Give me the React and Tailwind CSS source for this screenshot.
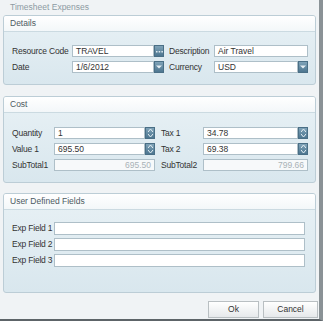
import React from 'react'

const font = { fontFamily: '"Liberation Sans", Arial, sans-serif' }

function SideButton({ kind }) {
  return (
    <div className="w-[10px] h-full shrink-0 flex flex-col items-center justify-center bg-gradient-to-b from-[#7fa3b8] to-[#4d7690] border border-[#4a6f86]">
      {kind === 'dots' && (
        <svg width="7" height="3" viewBox="0 0 7 3"><rect x="0" y="1" width="1.5" height="1.5" fill="#dfeaf0" /><rect x="2.7" y="1" width="1.5" height="1.5" fill="#dfeaf0" /><rect x="5.4" y="1" width="1.5" height="1.5" fill="#dfeaf0" /></svg>
      )}
      {kind === 'drop' && (
        <svg width="6" height="4" viewBox="0 0 6 4"><path d="M0 0.5 L6 0.5 L3 3.5 Z" fill="#e6eff4" /></svg>
      )}
      {kind === 'spin' && (
        <div className="flex flex-col items-center gap-[2px]">
          <svg width="5" height="3" viewBox="0 0 5 3"><path d="M0 3 L2.5 0 L5 3" fill="none" stroke="#e6eff4" strokeWidth="1" /></svg>
          <svg width="5" height="3" viewBox="0 0 5 3"><path d="M0 0 L2.5 3 L5 0" fill="none" stroke="#e6eff4" strokeWidth="1" /></svg>
        </div>
      )}
    </div>
  )
}

function Field({ w, value, side, disabled }) {
  return (
    <div className={`flex h-[12px] shrink-0 ${w}`}>
      <div className={`flex-1 h-full border border-[#aebfc8] flex items-center px-[3px] text-[8.5px] leading-none whitespace-nowrap ${disabled ? 'bg-[#f7f9fa] text-[#a9b2b7] justify-end' : 'bg-white text-[#333]'}`}>
        {value}
      </div>
      {side && <SideButton kind={side} />}
    </div>
  )
}

function Group({ title, h, children, bodyClass }) {
  return (
    <div className={`ml-[3px] w-[313px] shrink-0 ${h} rounded-[3px] border border-[#bccdd6] overflow-hidden flex flex-col bg-gradient-to-b from-[#e8f1f5] to-[#d9e7ee]`}>
      <div className="h-[16px] shrink-0 bg-gradient-to-b from-white to-[#f3f7f9] border-b border-[#cbdae1] flex items-center pl-[6px] text-[8.5px] text-[#4d5a62] whitespace-nowrap">
        {title}
      </div>
      <div className={`flex flex-col pl-[8px] ${bodyClass}`}>{children}</div>
    </div>
  )
}

function Label({ w, children }) {
  return <div className={`${w} text-[8.5px] tracking-[-0.2px] text-[#333] leading-none shrink-0 whitespace-nowrap`}>{children}</div>
}

export default function App() {
  return (
    <div className="w-[323px] h-[321px] bg-[#f0f3f5] flex flex-col border-r-[4px] border-r-[#8a9296] border-b-[2px] border-b-[#5d6468]" style={font}>
      <div className="h-[15px] shrink-0 pl-[10px] flex items-center text-[8.5px] text-[#8d9ba3] whitespace-nowrap">Timesheet Expenses</div>

      <Group title="Details" h="h-[70px]" bodyClass="pt-[13px] gap-[4px]">
        <div className="flex items-center">
          <Label w="w-[60px]">Resource Code</Label>
          <Field w="w-[92px]" value="TRAVEL" side="dots" />
          <div className="w-[5px] shrink-0" />
          <Label w="w-[45px]">Description</Label>
          <Field w="w-[94px]" value="Air Travel" />
        </div>
        <div className="flex items-center">
          <Label w="w-[60px]">Date</Label>
          <Field w="w-[92px]" value="1/6/2012" side="drop" />
          <div className="w-[5px] shrink-0" />
          <Label w="w-[45px]">Currency</Label>
          <Field w="w-[94px]" value="USD" side="drop" />
        </div>
      </Group>

      <div className="h-[11px] shrink-0" />

      <Group title="Cost" h="h-[87px]" bodyClass="pt-[14px] gap-[4px]">
        <div className="flex items-center">
          <Label w="w-[42px]">Quantity</Label>
          <Field w="w-[101px]" value="1" side="spin" />
          <div className="w-[6px] shrink-0" />
          <Label w="w-[42px]">Tax 1</Label>
          <Field w="w-[105px]" value="34.78" side="spin" />
        </div>
        <div className="flex items-center">
          <Label w="w-[42px]">Value 1</Label>
          <Field w="w-[101px]" value="695.50" side="spin" />
          <div className="w-[6px] shrink-0" />
          <Label w="w-[42px]">Tax 2</Label>
          <Field w="w-[105px]" value="69.38" side="spin" />
        </div>
        <div className="flex items-center">
          <Label w="w-[42px]">SubTotal1</Label>
          <Field w="w-[101px]" value="695.50" disabled />
          <div className="w-[6px] shrink-0" />
          <Label w="w-[42px]">SubTotal2</Label>
          <Field w="w-[105px]" value="799.66" disabled />
        </div>
      </Group>

      <div className="h-[10px] shrink-0" />

      <Group title="User Defined Fields" h="h-[100px]" bodyClass="pt-[12px] gap-[3px]">
        {['Exp Field 1', 'Exp Field 2', 'Exp Field 3'].map(l => (
          <div key={l} className="flex items-center">
            <Label w="w-[42px]">{l}</Label>
            <div className="w-[251px] h-[13px] shrink-0 bg-white border border-[#aebfc8]" />
          </div>
        ))}
      </Group>

      <div className="flex justify-end gap-[4px] pr-[1px] mt-[8px]">
        <button className="w-[51px] h-[17px] shrink-0 border border-[#b9bfc2] bg-gradient-to-b from-white to-[#e6e9eb] text-[8.5px] text-[#333]">Ok</button>
        <button className="w-[55px] h-[17px] shrink-0 border border-[#b9bfc2] bg-gradient-to-b from-white to-[#e6e9eb] text-[8.5px] text-[#333]">Cancel</button>
      </div>
    </div>
  )
}
